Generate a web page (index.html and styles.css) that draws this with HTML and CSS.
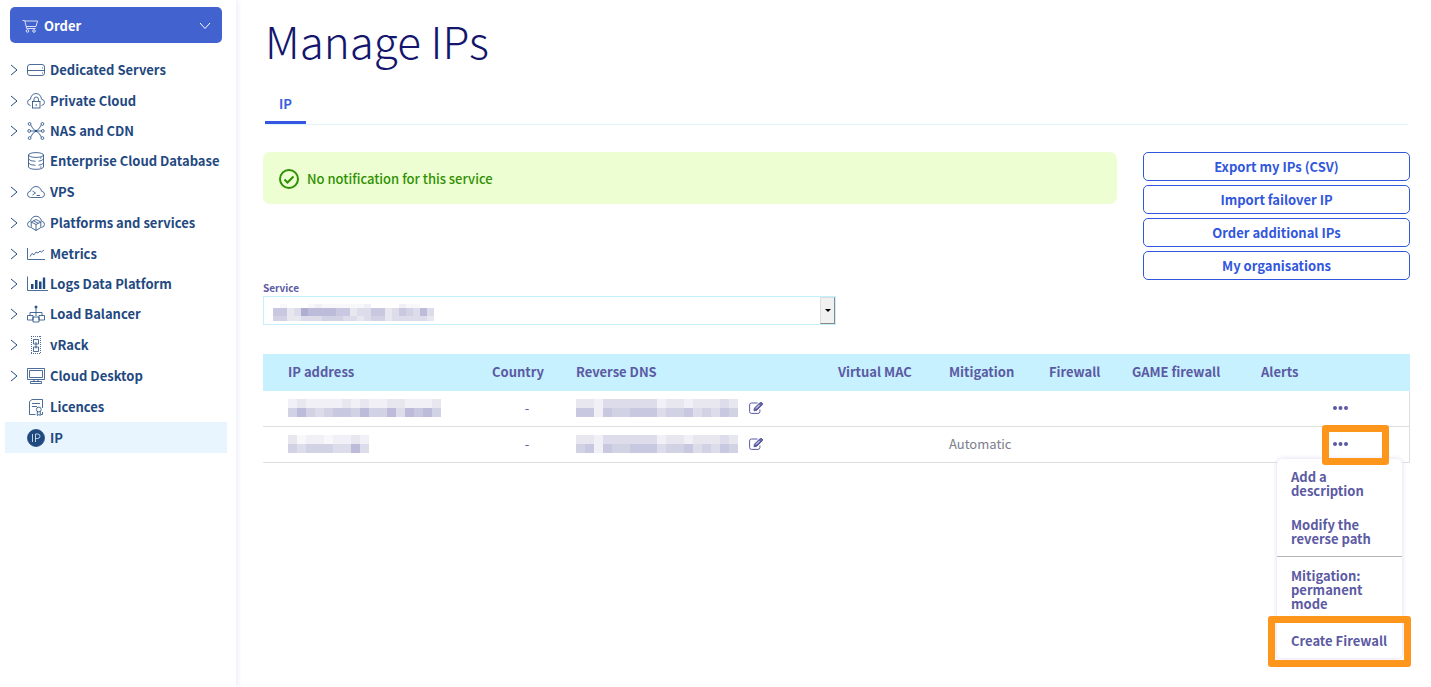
FILE: index.html
```html
<!DOCTYPE html>
<html lang="en">
<head>
<meta charset="utf-8">
<title>Manage IPs</title>
<link rel="stylesheet" href="styles.css">
</head>
<body>
<svg class="defs" aria-hidden="true">
  <symbol id="chev" viewBox="0 0 8 12"><path d="M1 1l6 5-6 5"/></symbol>
  <symbol id="edit" viewBox="0 0 14 12"><path d="M8.500 1H2.500Q.6 1 .6 2.900V9.500Q.6 11.400 2.500 11.400H9Q10.900 11.400 10.900 9.500V7.500"/><path class="solid" d="M5 8.800l.4-2.600L10.700.9l2.300 2.200-5.400 5.300zM11.200.5l.6-.5 2.200 2-.6.7z"/><path class="cut" d="M7 6.500l3.700-3.700"/></symbol>
</svg>
<div class="page">
  <nav class="sidebar" aria-label="Services">
    <button class="order" type="button">
      <svg class="cart" viewBox="0 0 16 14"><path d="M.5 1.500h2.200l2 8h8.800M3 2h12.500l-1.500 5.500H4.300"/><circle cx="5.500" cy="12" r="1.300"/><circle cx="12" cy="12" r="1.300"/></svg>
      <span>Order</span>
      <svg class="down" viewBox="0 0 12 8"><path d="M1 1l5 5.500L11 1"/></svg>
    </button>
    <ul class="menu">
      <li><a href="#"><svg class="chev"><use href="#chev"/></svg><svg class="icon" viewBox="0 0 18 18"><rect x=".5" y="3.500" width="17" height="11" rx="2.500"/><path d="M.5 9.500h17M15 7h1M15 12h1"/></svg>Dedicated Servers</a></li>
      <li><a href="#"><svg class="chev"><use href="#chev"/></svg><svg class="icon" viewBox="0 0 18 18"><path d="M3.500 13.500Q.5 13 .5 10.300.6 7.500 3.500 7.200 4 2 9 1.500q5 .5 5.500 5.700 2.900.4 3 3.100 0 2.700-3 3.200"/><rect x="5.500" y="9.500" width="7.500" height="6.500"/><path d="M7 9.500V7.300Q7 5 9.200 5t2.300 2.300v2.200M9.200 12v2"/></svg>Private Cloud</a></li>
      <li class="tight"><a href="#"><svg class="chev"><use href="#chev"/></svg><svg class="icon" viewBox="0 0 18 18"><path d="M3 9h12M3.300 2.300Q6 8 9 9q3-1 5.700-6.700M3.300 15.700Q6 10 9 9q3 1 5.700 6.700"/><circle class="paper" cx="2.600" cy="1.900" r="1.400"/><circle class="paper" cx="15.400" cy="1.900" r="1.400"/><circle class="paper" cx="2.600" cy="16.100" r="1.400"/><circle class="paper" cx="15.400" cy="16.100" r="1.400"/><circle class="paper" cx="2.200" cy="9" r="1.400"/><circle class="paper" cx="15.800" cy="9" r="1.400"/><circle class="solid" cx="9" cy="9" r=".8"/></svg>NAS and CDN</a></li>
      <li><a href="#"><span class="chev"></span><svg class="icon" viewBox="0 0 18 18"><ellipse cx="9" cy="3" rx="7.500" ry="2.400"/><path d="M1.500 3v12q1 2.300 7.500 2.300t7.500-2.300V3M1.500 7q1.500 2.300 7 2.300M11.500 9.200q4-.5 5-2.200M1.500 11q1.500 2.300 7 2.300M11.500 13.200q4-.5 5-2.200M13 6h1.500M13 15h1.500"/></svg>Enterprise Cloud Database</a></li>
      <li><a href="#"><svg class="chev"><use href="#chev"/></svg><svg class="icon" viewBox="0 0 18 18"><path d="M3.500 14.500Q.5 14 .5 11.300.6 8.500 3.500 8.200 4.500 3.800 9 3.500q4.500.3 5.500 4.700 2.900.4 3 3.100 0 2.700-3 3.200z"/><path d="M5.500 8l3 2-3 2M9.500 12.500H13"/></svg>VPS</a></li>
      <li><a href="#"><svg class="chev"><use href="#chev"/></svg><svg class="icon" viewBox="0 0 18 18"><path d="M3.500 13.500Q.5 13 .5 10.300.6 7.500 3.500 7.200 4.500 2.500 9 2.200q4.500.3 5.500 5 2.900.4 3 3.100 0 2.700-3 3.200"/><path d="M9 5.500l4.800 2.500v5.500L9 16.500l-4.800-3V8zM4.200 8L9 10.500 13.800 8M9 10.500v6M6.500 6.800l4.800 2.500"/></svg>Platforms and services</a></li>
      <li><a href="#"><svg class="chev"><use href="#chev"/></svg><svg class="icon" viewBox="0 0 18 18"><path d="M.5 3v11.500H18M3 11.500l2-3 2 1.300L9 7l2 1 2-2 1.500 1L17 5"/></svg>Metrics</a></li>
      <li class="tight"><a href="#"><svg class="chev"><use href="#chev"/></svg><svg class="icon logs" viewBox="0 0 21 18"><path d="M.5 1.500V15.500H21"/><path class="solid bare" d="M4 9h2.500v5H4zM8 5h2.500v9H8zM12 6.500h2.500V14H12zM15.800 2.500h2.400V14h-2.400z"/></svg>Logs Data Platform</a></li>
      <li><a href="#"><svg class="chev"><use href="#chev"/></svg><svg class="icon" viewBox="0 0 18 18"><circle class="solid" cx="9" cy="2" r="1.100"/><path d="M9 3v8M3 11V7.500h12V11"/><path class="paper" d="M.5 10.500h5.500v4.500H.5zM12 10.500h5.500v4.500H12zM6 12h6v5H6z"/></svg>Load Balancer</a></li>
      <li><a href="#"><svg class="chev"><use href="#chev"/></svg><svg class="icon" viewBox="0 0 18 18"><path stroke-dasharray="1 1" d="M4.500 0v18M13.500 0v18M4 .5h10M4 17.500h10"/><path d="M6.500 3.500h5v4.500h-5zM6.500 11h5v4.500h-5zM9 6v6.500"/></svg>vRack</a></li>
      <li><a href="#"><svg class="chev"><use href="#chev"/></svg><svg class="icon" viewBox="0 0 18 18"><path d="M.5 1.500h17v11H.5zM2.500 3.500h13v7h-13zM7 12.500V15M11 12.500V15M3.500 14.500h11v2h-11z"/></svg>Cloud Desktop</a></li>
      <li><a href="#"><span class="chev"></span><svg class="icon" viewBox="0 0 18 18"><path d="M8.500 16.500H2.500v-13l2.500-2h10.500V10M5 5.500h8M5 8.500h5"/><circle cx="11.800" cy="11.500" r="2.400"/><path d="M10.300 13.500v4l1.500-1 1.500 1v-4M15.500 14v2.500H14"/></svg>Licences</a></li>
      <li class="current"><a href="#" aria-current="page"><span class="chev"></span><svg class="icon" viewBox="0 0 18 18"><circle class="solid" cx="9" cy="9" r="8.500"/><path class="light" d="M5.500 5v8M8.500 13V5h2.300q2.200.2 2.200 2.200t-2.200 2.300H8.500"/></svg>IP</a></li>
    </ul>
  </nav>
  <main class="content">
    <h1>Manage IPs</h1>
    <div class="tabs"><a class="tab" href="#" aria-current="page">IP</a></div>
    <div class="top">
      <div class="left">
        <div class="notice" role="status">
          <svg viewBox="0 0 20 20"><circle cx="10" cy="10" r="9"/><path d="M5.500 10.500l3 3 6-6"/></svg>
          No notification for this service
        </div>
        <div class="field">
          <label for="service">Service</label>
          <div class="combo">
            <select id="service"><option></option></select>
            <span class="arrow"></span>
            <svg class="mosaic" id="m0" width="165" height="18"></svg>
          </div>
        </div>
      </div>
      <div class="actions">
        <button type="button">Export my IPs (CSV)</button>
        <button type="button">Import failover IP</button>
        <button type="button">Order additional IPs</button>
        <button type="button">My organisations</button>
      </div>
    </div>
    <table class="ips">
      <colgroup><col class="c-ip"><col class="c-country"><col class="c-dns"><col class="c-mac"><col class="c-mit"><col class="c-fw"><col class="c-game"><col class="c-alert"><col></colgroup>
      <thead><tr><th>IP address</th><th>Country</th><th>Reverse DNS</th><th>Virtual MAC</th><th>Mitigation</th><th>Firewall</th><th>GAME firewall</th><th>Alerts</th><th></th></tr></thead>
      <tbody>
        <tr>
          <td><svg class="mosaic" id="m1" width="153" height="18"></svg></td><td class="country">-</td>
          <td><div class="dns"><svg class="mosaic" id="m2" width="162" height="18"></svg><button class="ghost" type="button" aria-label="Edit"><svg class="edit"><use href="#edit"/></svg></button></div></td>
          <td></td><td></td><td></td><td></td><td></td>
          <td><button class="ghost dots" type="button" aria-label="Actions"><svg viewBox="0 0 15 4"><circle cx="2" cy="2" r="2"/><circle cx="7.500" cy="2" r="2"/><circle cx="13" cy="2" r="2"/></svg></button></td>
        </tr>
        <tr>
          <td><svg class="mosaic" id="m3" width="81" height="18"></svg></td><td class="country">-</td>
          <td><div class="dns"><svg class="mosaic" id="m4" width="162" height="18"></svg><button class="ghost" type="button" aria-label="Edit"><svg class="edit"><use href="#edit"/></svg></button></div></td>
          <td></td><td>Automatic</td><td></td><td></td><td></td>
          <td class="open"><button class="ghost dots" type="button" aria-label="Actions"><svg viewBox="0 0 15 4"><circle cx="2" cy="2" r="2"/><circle cx="7.500" cy="2" r="2"/><circle cx="13" cy="2" r="2"/></svg></button>
            <div class="popup">
              <button type="button">Add a description</button>
              <button type="button">Modify the reverse path</button>
              <hr>
              <button type="button">Mitigation: permanent mode</button>
              <button class="create" type="button">Create Firewall<span class="mark mark-item"></span></button>
            </div>
            <span class="mark mark-dots"></span>
          </td>
        </tr>
      </tbody>
    </table>
  </main>
</div>
<script src="mosaic.js"></script>
</body>
</html>
```
FILE: mosaic.js
```js
// Masked values: each digit is a shade level for one cell.
const shades = ["#ffffff", "#f8f8fb", "#f1f0f6", "#e8e7f0", "#dddcea", "#d2d2e5", "#c8c8e0", "#bcbbd9", "#afaed2"];
const masks = {
  m0: { w: 7, rows: [[4, "01000121111112000021100"], [8, "66348777766344663465474"], [5, "55334445554434553444443"]] },
  m1: { w: 9, rows: [[9, "23222232322332223"], [9, "57545665755747675"]] },
  m2: { w: 9, rows: [[9, "332444444233233343"], [9, "662655666455645465"]] },
  m3: { w: 9, rows: [[9, "312212232"], [9, "545554474"]] },
  m4: { w: 9, rows: [[9, "332444444233233343"], [9, "562655666455645465"]] }
};
for (const [id, mask] of Object.entries(masks)) {
  const svg = document.getElementById(id);
  let y = 0;
  for (const [h, cells] of mask.rows) {
    [...cells].forEach((level, i) => {
      const r = document.createElementNS("http://www.w3.org/2000/svg", "rect");
      r.setAttribute("x", i * mask.w);
      r.setAttribute("y", y);
      r.setAttribute("width", mask.w);
      r.setAttribute("height", h);
      r.setAttribute("fill", shades[level]);
      svg.append(r);
    });
    y += h;
  }
}
```
FILE: styles.css
```css
* { box-sizing: border-box; }
body { margin: 0; background: #fff; color: #5b5aa3; font: 13px/20px "Noto Sans CJK SC", "Noto Sans CJK JP", sans-serif; }
button, select { font: inherit; color: inherit; }
svg { fill: none; stroke: currentColor; flex: none; }
a { color: inherit; text-decoration: none; }
.defs { position: absolute; width: 0; height: 0; }
.solid { fill: currentColor; }
.bare { stroke: none; }
.paper { fill: #fff; }
.cut { stroke: #fff; stroke-width: 1; }
.light { stroke: #e8f6ff; }

.page { display: flex; min-height: 100vh; }
.sidebar { flex: none; width: 236px; padding-top: 7px; color: #1f497f; box-shadow: 2px 0 5px #eeeefa; }
.order { display: flex; align-items: center; gap: 6px; width: 212px; height: 36px; margin-left: 10px; padding: 2px 11px 0 12px; border: 0; border-radius: 5px; background: #4262cf; color: #fff; font-weight: 700; text-align: left; }
.order span { flex: 1; }
.cart { width: 16px; height: 14px; stroke-width: .8; }
.down { width: 12px; height: 8px; stroke-width: 1; }
.menu { list-style: none; margin: 11px 9px 0 5px; padding: 0; }
.menu li { display: flex; height: 31px; }
.menu .tight { height: 29px; }
.menu .current { background: #e8f5fe; }
.menu a { display: flex; align-items: center; flex: 1; padding: 1px 0 0 5px; font-weight: 700; white-space: nowrap; }
.chev { width: 8px; height: 12px; margin-right: 9px; }
.icon { width: 18px; height: 18px; margin-right: 5px; stroke-width: .8; }
.logs { width: 21px; margin-right: 2px; }

.content { flex: 1; padding: 0 21px 0 27px; }
h1 { margin: 8px 0 0 2px; color: #14166e; font-size: 44px; line-height: 64px; font-weight: 300; }
.tabs { display: flex; height: 35px; margin: 18px 2px 0; border-bottom: 1px solid #e0f4fd; }
.tab { height: 34px; padding: 2px 14px 0; border-bottom: 3px solid #3556e0; line-height: 24px; color: #3a5fe0; font-weight: 700; }
.top { display: flex; gap: 26px; margin-top: 27px; }
.left { flex: 1; }
.notice { display: flex; align-items: center; gap: 8px; height: 52px; padding: 2px 16px 0; border-radius: 7px; background: #ecfed2; color: #2f9000; font-weight: 500; }
.notice svg { width: 20px; height: 20px; stroke-width: 2; }
.field { width: 67.1%; margin-top: 76px; }
.field label { display: block; font-size: 10px; line-height: 16px; font-weight: 700; }
.combo { position: relative; }
.combo select { display: block; width: 100%; height: 29px; padding: 0 22px 0 10px; border: 1px solid #c4f0fc; border-radius: 0; background: #fff; appearance: none; }
.arrow { position: absolute; top: 1px; right: 1px; bottom: 1px; width: 15px; border: 1px solid #ddd; border-right-color: #888; border-bottom-color: #888; background: #f1f1f1; pointer-events: none; }
.arrow::after { content: ""; position: absolute; left: 4px; top: 11px; border: 3px solid transparent; border-top-color: #000; border-bottom: 0; }
.mosaic { display: block; stroke: none; shape-rendering: crispEdges; }
.combo .mosaic { position: absolute; left: 10px; top: 8px; pointer-events: none; }
.actions { display: flex; flex-direction: column; gap: 4px; width: 267px; }
.actions button { height: 29px; padding: 0; border: 1px solid #3157dc; border-radius: 5px; background: #fff; color: #3157dc; font-weight: 700; line-height: 20px; }

.ips { width: 100%; margin-top: 29px; border-collapse: separate; border-spacing: 0; table-layout: fixed; }
.c-ip { width: 18.92%; }
.c-country { width: 7.32%; }
.c-dns { width: 22.84%; }
.c-mac { width: 9.68%; }
.c-mit { width: 8.72%; }
.c-fw { width: 7.24%; }
.c-game { width: 11.25%; }
.c-alert { width: 6.28%; }
.ips th { height: 37px; padding: 0 0 2px 12px; background: #c7f1fe; text-align: left; font-weight: 700; white-space: nowrap; }
.ips td { height: 36px; padding: 0 0 1px 12px; border-bottom: 1px solid #dedee0; color: #7b808b; }
.ips th:first-child, .ips td:first-child { padding-left: 25px; }
.ips td:last-child { border-right: 1px solid #dedee0; }
.ips .country { padding-right: 2px; text-align: center; color: #5b5aa3; }
.dns { display: flex; align-items: center; gap: 11px; }
.ghost { display: flex; padding: 0; border: 0; background: none; color: #5b5aa3; }
.edit { width: 14px; height: 12px; stroke-width: 1; }
.edit .solid { stroke: none; }
.dots svg { width: 15px; height: 4px; fill: currentColor; stroke: none; }
.open { position: relative; }
.popup { position: absolute; z-index: 1; top: 32px; right: 7px; width: 125px; border-radius: 5px; background: #fff; box-shadow: 0 0 5px #d9d8f0; }
.popup button { position: relative; display: block; width: 100%; padding: 11px 12px 9px 14px; border: 0; background: none; color: #5b5aa3; font-weight: 700; line-height: 14px; text-align: left; }
.popup hr { height: 1px; margin: 1px 0; border: 0; background: #b5b5b9; }
.popup .create { padding: 14px 12px 10px 14px; }
.mark { position: absolute; border: 7px solid #ff961c; border-radius: 3px; pointer-events: none; }
.mark-item { left: -9px; right: -9px; top: -4px; bottom: -9px; }
.mark-dots { z-index: 2; left: 1px; top: -2px; width: 67px; height: 40px; }
```
